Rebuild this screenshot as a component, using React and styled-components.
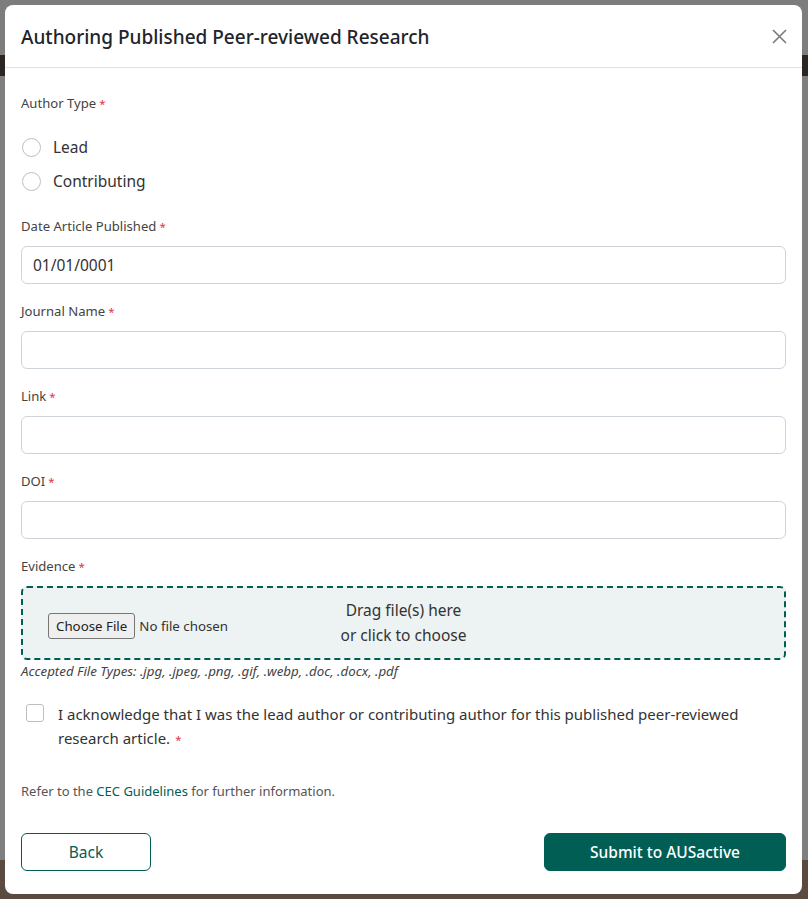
import React from "react";
import styled, { createGlobalStyle } from "styled-components";

const Global = createGlobalStyle`
  * { box-sizing: border-box; }
  html, body { margin: 0; padding: 0; }
  body {
    font-family: "Noto Sans", "Open Sans", "DejaVu Sans", sans-serif;
    color: #333;
  }
`;

const TEAL = "#005e55";

const Backdrop = styled.div`
  min-height: 899px;
  padding: 5px 6px 5px 5px;
  background: linear-gradient(
    to bottom,
    #7d7d7d 0 55px,
    #2b2622 55px 76px,
    #7f7f7f 76px 860px,
    #5b4a3f 860px
  );
`;

const Modal = styled.div`
  width: 797px;
  background: #fff;
  border-radius: 8px;
  overflow: hidden;
`;

const Header = styled.div`
  height: 63px;
  padding: 1px 15px 0 16px;
  display: flex;
  align-items: center;
  justify-content: space-between;
  border-bottom: 1px solid #dee2e6;
`;

const Title = styled.h1`
  margin: 0;
  font-size: 19px;
  font-weight: 500;
  color: #212529;
`;

const Close = styled.button`
  width: 15px;
  height: 15px;
  padding: 0;
  border: 0;
  background: none;
  display: flex;
  cursor: pointer;
`;

const Body = styled.div`
  padding: 24px 16px 23px;
`;

const Label = styled.div`
  height: 22px;
  font-size: 13.1px;
  line-height: 22px;
  color: #444;
`;

const Req = styled.span`
  color: #e0324a;
  margin-left: ${(p) => p.$gap ?? 3}px;
  font-size: 11.5px;
  line-height: 1;
`;

const RadioGroup = styled.div`
  margin: 16px 0 17px;
  display: flex;
  flex-direction: column;
`;

const RadioRow = styled.label`
  height: 34px;
  display: flex;
  align-items: center;
  gap: 12px;
  font-size: 15.5px;
  color: #333;
`;

const RadioCircle = styled.span`
  width: 19px;
  height: 19px;
  margin-left: 1px;
  border-radius: 50%;
  border: 1px solid #bfbfbf;
  background: #fff;
`;

const Field = styled.div`
  display: flex;
  flex-direction: column;
  gap: 9px;
  margin-bottom: 16px;
`;

const Input = styled.div`
  height: 38px;
  border: 1px solid #ced4da;
  border-radius: 6px;
  padding: 0 11px;
  display: flex;
  align-items: center;
  font-size: 15.5px;
  color: #333;
`;

const Drop = styled.div`
  height: 74px;
  border: 2px dashed ${TEAL};
  border-radius: 6px;
  background: #edf2f2;
  display: grid;
  grid-template-columns: 1fr auto 1fr;
  align-items: center;
  padding: 0 25px;
`;

const FilePick = styled.div`
  display: flex;
  align-items: center;
  gap: 4px;
  font-size: 13.3px;
  color: #333;
  margin-top: 6px;
`;

const FileButton = styled.span`
  display: inline-flex;
  align-items: center;
  height: 26px;
  padding: 0 7px;
  background: #efefef;
  border: 1px solid #767676;
  border-radius: 3px;
  font-size: 13.3px;
  color: #222;
`;

const DropText = styled.div`
  font-size: 15.5px;
  line-height: 25px;
  text-align: center;
  color: #333;
  margin-top: -1px;
`;

const Hint = styled.div`
  margin-top: 2px;
  font-size: 13.3px;
  line-height: 18px;
  font-style: italic;
  color: #444;
`;

const Ack = styled.label`
  margin-top: 22px;
  display: flex;
  align-items: flex-start;
  gap: 14px;
  padding-left: 5px;
  font-size: 15px;
  line-height: 24px;
  color: #333;
`;

const Box = styled.span`
  flex: none;
  width: 18px;
  height: 18px;
  margin-top: 2px;
  border: 1px solid #bfbfbf;
  border-radius: 3px;
  background: #fff;
`;

const Note = styled.p`
  margin: 32px 0 0;
  font-size: 13px;
  line-height: 18px;
  color: #555;
`;

const Link = styled.a`
  color: ${TEAL};
  text-decoration: none;
`;

const Footer = styled.div`
  margin-top: 33px;
  display: flex;
  justify-content: space-between;
`;

const Button = styled.button`
  height: 38px;
  width: ${(p) => p.$w}px;
  border-radius: 6px;
  font-family: inherit;
  font-size: 15.5px;
  border: 1px solid ${TEAL};
  background: ${(p) => (p.$primary ? TEAL : "#fff")};
  color: ${(p) => (p.$primary ? "#fff" : TEAL)};
  font-weight: ${(p) => (p.$primary ? 500 : 400)};
  cursor: pointer;
`;

function Req1() {
  return <Req>*</Req>;
}

export default function App() {
  return (
    <>
      <Global />
      <Backdrop>
        <Modal>
          <Header>
            <Title>Authoring Published Peer-reviewed Research</Title>
            <Close aria-label="Close">
              <svg width="15" height="15" viewBox="0 0 15 15">
                <path d="M1 1 L14 14 M14 1 L1 14" stroke="#7a7a7a" strokeWidth="1.6" />
              </svg>
            </Close>
          </Header>
          <Body>
            <Label>
              Author Type<Req1 />
            </Label>
            <RadioGroup>
              <RadioRow>
                <RadioCircle />
                Lead
              </RadioRow>
              <RadioRow>
                <RadioCircle />
                Contributing
              </RadioRow>
            </RadioGroup>
            <Field>
              <Label>
                Date Article Published<Req1 />
              </Label>
              <Input>01/01/0001</Input>
            </Field>
            <Field>
              <Label>
                Journal Name<Req1 />
              </Label>
              <Input />
            </Field>
            <Field>
              <Label>
                Link<Req1 />
              </Label>
              <Input />
            </Field>
            <Field>
              <Label>
                DOI<Req1 />
              </Label>
              <Input />
            </Field>
            <Field>
              <Label>
                Evidence<Req1 />
              </Label>
              <div>
                <Drop>
                  <FilePick>
                    <FileButton>Choose File</FileButton>
                    No file chosen
                  </FilePick>
                  <DropText>
                    Drag file(s) here
                    <br />
                    or click to choose
                  </DropText>
                  <span />
                </Drop>
                <Hint>
                  Accepted File Types: .jpg, .jpeg, .png, .gif, .webp, .doc, .docx, .pdf
                </Hint>
              </div>
            </Field>
            <Ack>
              <Box />
              <span>
                I acknowledge that I was the lead author or contributing author for this
                published peer-reviewed research article.<Req $gap={5}>*</Req>
              </span>
            </Ack>
            <Note>
              Refer to the <Link href="#">CEC Guidelines</Link> for further information.
            </Note>
            <Footer>
              <Button $w={130}>Back</Button>
              <Button $primary $w={242}>
                Submit to AUSactive
              </Button>
            </Footer>
          </Body>
        </Modal>
      </Backdrop>
    </>
  );
}
